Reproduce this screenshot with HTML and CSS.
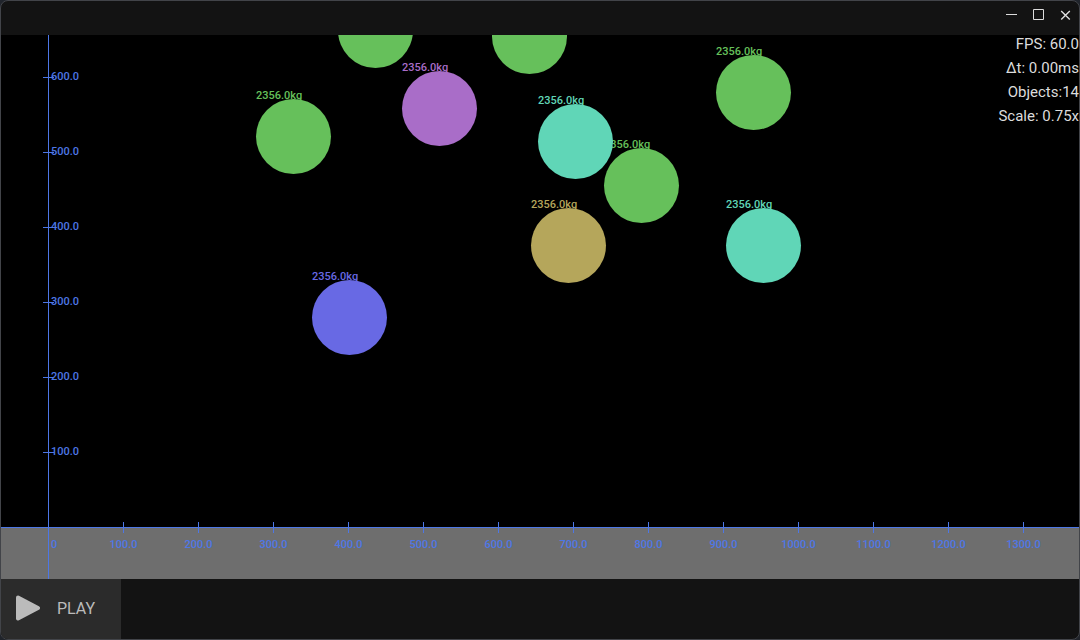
FILE: index.html
```html
<!DOCTYPE html>
<html lang="en">
<head>
<meta charset="utf-8">
<title>Physics simulation</title>
<link rel="stylesheet" href="styles.css">
</head>
<body>
<div class="window">
  <header class="titlebar">
    <button class="win-btn" type="button" aria-label="Minimize"><svg viewBox="0 0 13 13"><path d="M1 6.5h11"/></svg></button>
    <button class="win-btn" type="button" aria-label="Maximize"><svg viewBox="0 0 13 13"><path d="M1.5 1.5h10v10h-10z"/></svg></button>
    <button class="win-btn" type="button" aria-label="Close"><svg viewBox="0 0 13 13"><path class="cross" d="M2.2 3l8.6 8.6M10.8 3l-8.6 8.6"/></svg></button>
  </header>

  <main class="scene">
    <div class="ground"></div>

    <div class="body green" style="left:603px;bottom:356px"><span class="mass">2356.0kg</span><span class="ball"></span></div>
    <div class="body green" style="left:255px;bottom:405px"><span class="mass">2356.0kg</span><span class="ball"></span></div>
    <div class="body green" style="left:337px;bottom:511px"><span class="ball"></span></div>
    <div class="body green" style="left:491px;bottom:505px"><span class="ball"></span></div>
    <div class="body green" style="left:715px;bottom:449px"><span class="mass">2356.0kg</span><span class="ball"></span></div>
    <div class="body purple" style="left:401px;bottom:433px"><span class="mass">2356.0kg</span><span class="ball"></span></div>
    <div class="body teal" style="left:537px;bottom:400px"><span class="mass">2356.0kg</span><span class="ball"></span></div>
    <div class="body teal" style="left:725px;bottom:296px"><span class="mass">2356.0kg</span><span class="ball"></span></div>
    <div class="body gold" style="left:530px;bottom:296px"><span class="mass">2356.0kg</span><span class="ball"></span></div>
    <div class="body blue" style="left:311px;bottom:224px"><span class="mass">2356.0kg</span><span class="ball"></span></div>

    <div class="axis-line"></div>
    <ol class="y-axis">
      <li>100.0</li><li>200.0</li><li>300.0</li><li>400.0</li><li>500.0</li><li>600.0</li>
    </ol>
    <span class="origin">0</span>
    <ol class="x-axis">
      <li>100.0</li><li>200.0</li><li>300.0</li><li>400.0</li><li>500.0</li><li>600.0</li><li>700.0</li><li>800.0</li><li>900.0</li><li>1000.0</li><li>1100.0</li><li>1200.0</li><li>1300.0</li>
    </ol>

    <div class="stats">
      <div>FPS: 60.0</div>
      <div>Δt: 0.00ms</div>
      <div>Objects:14</div>
      <div>Scale: 0.75x</div>
    </div>
  </main>

  <footer class="toolbar">
    <button class="play" type="button">
      <svg viewBox="0 0 26 26" aria-hidden="true"><path d="M3 2.500 23 13 3 23.500z"/></svg>
      <span>PLAY</span>
    </button>
  </footer>
</div>
</body>
</html>
```
FILE: styles.css
```css
* { box-sizing: border-box; }

body {
  margin: 0;
  background: #20242b;
  font-family: Roboto, sans-serif;
}

.window {
  display: flex;
  flex-direction: column;
  min-height: 100vh;
  border: 1px solid #424449;
  border-radius: 8px;
  background: #131313;
  overflow: hidden;
}

.titlebar {
  display: flex;
  justify-content: flex-end;
  height: 34px;
  padding: 0 0 7px;
}

.win-btn {
  display: flex;
  align-items: center;
  justify-content: center;
  width: 27px;
  padding: 0;
  border: 0;
  background: none;
}

.win-btn svg {
  width: 13px;
  height: 13px;
  fill: none;
  stroke: #dcdcdc;
}

.win-btn .cross { stroke-width: 1.4; }

.scene {
  position: relative;
  flex: 1;
  overflow: hidden;
  background: #000;
  color: #4d77e6;
  font-size: 11px;
  font-weight: 500;
  line-height: 12px;
}

.ground {
  position: absolute;
  inset: auto 0 0;
  height: 52px;
  border-top: 1px solid #4d77e6;
  background: #6e6e6e;
}

.axis-line {
  position: absolute;
  inset: 0 auto 0 47px;
  width: 1px;
  background: #4d77e6;
}

.y-axis,
.x-axis {
  position: absolute;
  display: flex;
  margin: 0;
  padding: 0;
  list-style: none;
}

.y-axis {
  left: 42px;
  bottom: 90px;
  flex-direction: column-reverse;
}

.y-axis li {
  position: relative;
  display: flex;
  align-items: center;
  height: 75px;
  padding-left: 8px;
}

.y-axis li::before {
  content: "";
  position: absolute;
  left: 0;
  top: 38px;
  width: 11px;
  height: 1px;
  background: #4d77e6;
}

.x-axis {
  left: 85px;
  bottom: 28px;
}

.x-axis li {
  display: flex;
  flex-direction: column;
  align-items: center;
  gap: 6px;
  width: 75px;
}

.x-axis li::before {
  content: "";
  width: 1px;
  height: 11px;
  background: #4d77e6;
}

.origin {
  position: absolute;
  left: 50px;
  bottom: 28px;
}

.body {
  position: absolute;
  display: flex;
  flex-direction: column;
}

.mass { margin-bottom: -3px; }

.ball {
  width: 75px;
  height: 75px;
  border-radius: 50%;
  background: currentColor;
}

.green { color: #66c05b; }
.purple { color: #a96dc8; }
.teal { color: #60d6b7; }
.gold { color: #b5a65b; }
.blue { color: #6869e4; }

.stats {
  position: absolute;
  top: -3px;
  right: 0;
  color: #dcdcdc;
  font-size: 15px;
  font-weight: 400;
  line-height: 24px;
  text-align: right;
}

.toolbar {
  display: flex;
  height: 60px;
}

.play {
  display: flex;
  align-items: center;
  gap: 16px;
  width: 120px;
  padding: 0 14px 2px;
  border: 0;
  background: #2b2b2b;
  color: #bbb;
  font: 16px Roboto, sans-serif;
}

.play svg {
  width: 26px;
  height: 26px;
  fill: #bbb;
  stroke: #bbb;
  stroke-width: 4;
  stroke-linejoin: round;
}
```
